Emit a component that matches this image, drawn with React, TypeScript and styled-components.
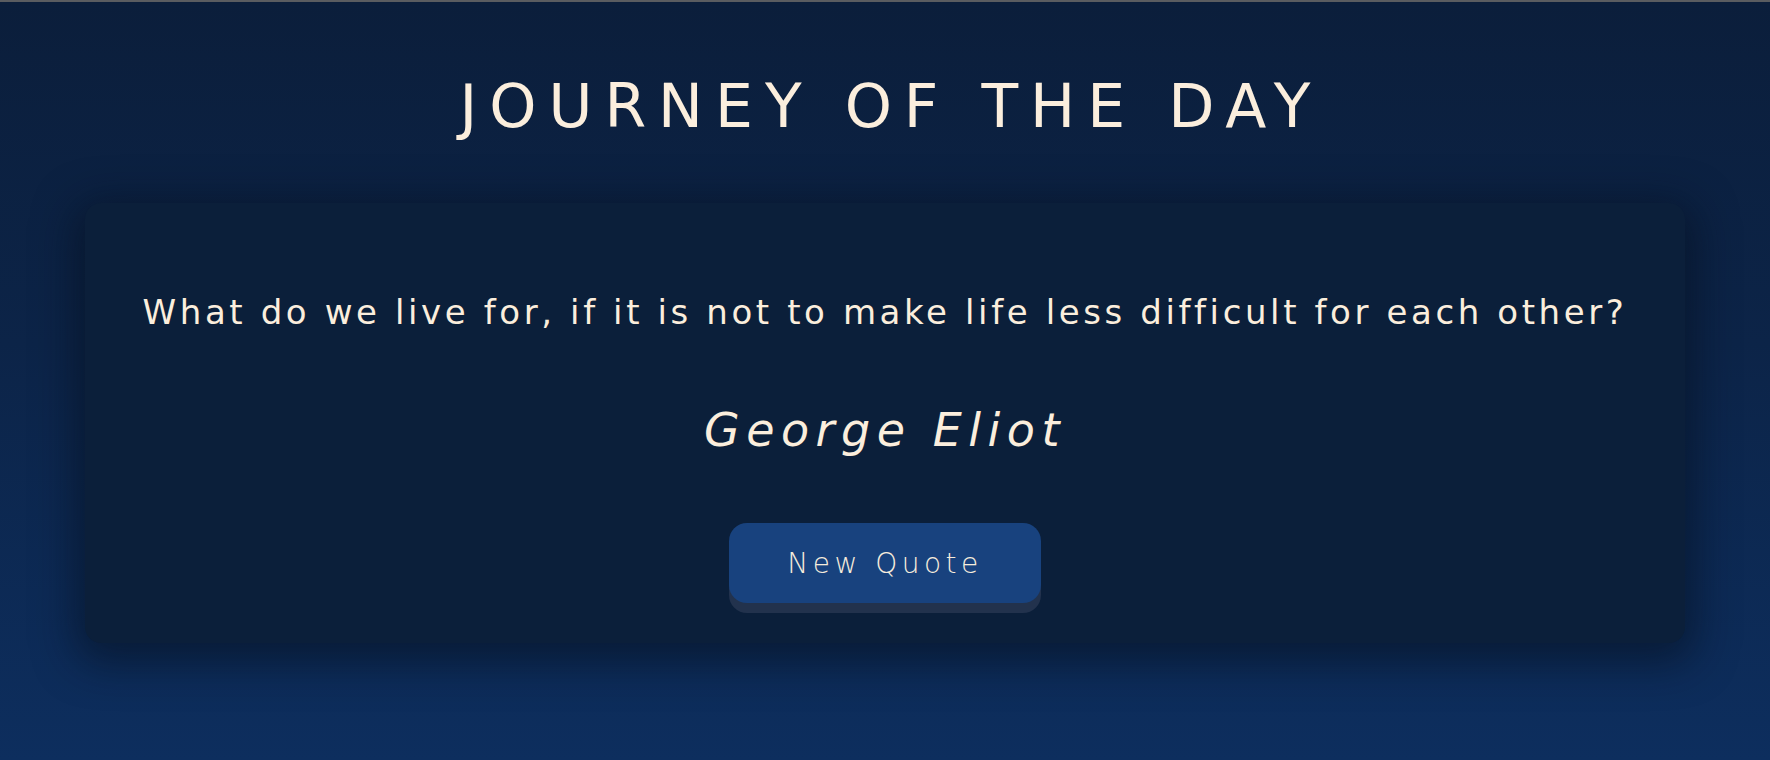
import styled, { createGlobalStyle } from "styled-components";

const GlobalStyle = createGlobalStyle`
  html, body {
    margin: 0;
    padding: 0;
  }
  body {
    background: #0b1f3c;
    font-family: "DejaVu Sans", "Liberation Sans", sans-serif;
  }
`;

const Page = styled.main`
  min-height: 100vh;
  box-sizing: border-box;
  border-top: 2px solid #5a5c60;
  background: linear-gradient(180deg, #0b1e3b 0%, #0c2448 45%, #0d2e5e 100%);
  display: flex;
  flex-direction: column;
  align-items: center;
  padding-top: 68px;
`;

const Title = styled.h1`
  margin: 0;
  color: #fbeedd;
  font-size: 60px;
  font-weight: 400;
  letter-spacing: 12px;
  line-height: 72px;
  padding-left: 12px;
`;

const Card = styled.section`
  width: 1600px;
  box-sizing: border-box;
  margin-top: 61px;
  padding: 87px 40px 30px;
  background: #0b1f3a;
  border-radius: 16px;
  box-shadow: 0 10px 40px 10px rgba(5, 14, 30, 0.55);
  display: flex;
  flex-direction: column;
  align-items: center;
`;

const Quote = styled.p`
  margin: 0;
  color: #fbeedd;
  font-size: 34px;
  font-weight: 400;
  letter-spacing: 3.6px;
  line-height: 44px;
  text-align: center;
`;

const Author = styled.p`
  margin: 68px 0 0;
  color: #fbeedd;
  font-size: 46px;
  font-weight: 200;
  font-style: italic;
  letter-spacing: 6.5px;
  line-height: 56px;
`;

const QuoteButton = styled.button`
  margin-top: 65px;
  margin-bottom: 10px;
  width: 312px;
  height: 80px;
  border: 0;
  border-radius: 18px;
  background: #18427e;
  box-shadow: 0 10px 0 #22324d;
  color: #f6ecdc;
  font-family: inherit;
  font-size: 28px;
  font-weight: 200;
  letter-spacing: 4.5px;
  cursor: pointer;
`;

function App() {
  return (
    <>
      <GlobalStyle />
      <Page>
        <Title>JOURNEY OF THE DAY</Title>
        <Card>
          <Quote>
            What do we live for, if it is not to make life less difficult for each other?
          </Quote>
          <Author>George Eliot</Author>
          <QuoteButton>New Quote</QuoteButton>
        </Card>
      </Page>
    </>
  );
}

export default App;
